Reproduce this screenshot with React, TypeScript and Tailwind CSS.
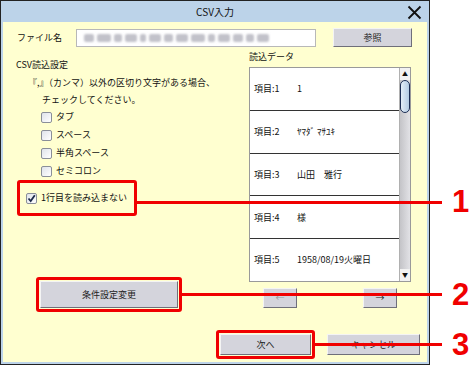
import type { ReactNode } from 'react';

const jp = { fontFamily: '"Noto Sans CJK JP", "Noto Sans", sans-serif' };

function Check({ checked = false }: { checked?: boolean }) {
  return (
    <span className="flex h-[11px] w-[11px] items-center justify-center rounded-[2px] border border-[#8a8f99] bg-gradient-to-br from-[#dfe3ea] to-[#ffffff]">
      {checked && (
        <svg width="9" height="9" viewBox="0 0 9 9">
          <path d="M1.5 4.5 L3.7 7 L7.8 1.2" fill="none" stroke="#1d2a4a" strokeWidth="1.8" />
        </svg>
      )}
    </span>
  );
}

function Btn({ children, className = '' }: { children?: ReactNode; className?: string }) {
  return (
    <div className={`flex items-center justify-center border border-[#f4f4f4] border-r-[#6f6f7a] border-b-[#6f6f7a] bg-[#d4d4dc] text-[9px] text-[#222] ${className}`}>
      {children}
    </div>
  );
}

const rows: [string, string][] = [
  ['項目:1', '1'],
  ['項目:2', 'ﾔﾏﾀﾞ ﾏｻﾕｷ'],
  ['項目:3', '山田　雅行'],
  ['項目:4', '様'],
  ['項目:5', '1958/08/19火曜日'],
];

const options = ['タブ', 'スペース', '半角スペース', 'セミコロン'];

export default function App() {
  return (
    <div className="relative h-[366px] w-[470px] overflow-hidden bg-white text-[#111]" style={jp}>
      <div className="flex h-[365px] w-[430px] flex-col border border-[#222]">
        {/* title bar */}
        <div className="relative flex h-[21px] items-center justify-center bg-[#bcd3e9] text-[10px]">
          CSV入力
          <svg className="absolute right-[7px] top-[4px]" width="15" height="15" viewBox="0 0 15 15">
            <path d="M1.5 1.5 L13.5 13.5 M13.5 1.5 L1.5 13.5" stroke="#111" strokeWidth="1.8" />
          </svg>
        </div>

        <div className="flex flex-1 flex-col border-x-2 border-b-2 border-[#bcd3e9] bg-[#ffffd0]">
          {/* file row */}
          <div className="mt-[6px] flex h-[19px] items-center">
            <div className="w-[73px] shrink-0 pl-[14px] text-[9px]">ファイル名</div>
            <div className="flex h-[18px] w-[240px] shrink-0 items-center gap-[3px] overflow-hidden border border-[#b8b8b8] bg-white pl-[7px]">
              {[10, 14, 8, 12, 6, 12, 9, 12, 14, 7, 12, 10, 8, 12].map((w, i) => (
                <span key={i} className="h-[8px] shrink-0 rounded-[2px] bg-[#c2c2ca] blur-[1px]" style={{ width: w }} />
              ))}
            </div>
            <Btn className="ml-[17px] h-[19px] w-[79px]">参照</Btn>
          </div>

          <div className="flex">
            {/* left column */}
            <div className="flex w-[246px] flex-col text-[9px] leading-[12px]">
              <div className="mt-[12px] pl-[13px]">CSV読込設定</div>
              <div className="mt-[6px] pl-[25px]">『,』（カンマ）以外の区切り文字がある場合、</div>
              <div className="mt-[5px] pl-[39px]">チェックしてください。</div>
              <div className="mt-[2px] flex flex-col pl-[38px]">
                {options.map((o) => (
                  <div key={o} className="flex h-[18px] items-center gap-[4px]">
                    <Check />
                    <span>{o}</span>
                  </div>
                ))}
              </div>
              <div className="ml-[14px] flex h-[36px] w-[120px] items-center gap-[4px] rounded-[3px] border-[3px] border-[#f00000] pl-[6px]">
                <Check checked />
                <span>1行目を読み込まない</span>
              </div>
              <div className="ml-[33px] mt-[61px] flex h-[35px] w-[146px] items-center justify-center rounded-[3px] border-[3px] border-[#f00000]">
                <Btn className="h-[27px] w-[138px]">条件設定変更</Btn>
              </div>
            </div>

            {/* right column */}
            <div className="flex w-[162px] flex-col">
              <div className="mt-[4px] h-[12px] text-[9px] leading-[12px]">読込データ</div>
              <div className="mt-[4px] flex h-[215px] border border-[#9a9a9a] bg-white">
                <div className="flex flex-1 flex-col">
                  {rows.map(([k, v], i) => (
                    <div
                      key={k}
                      className={`flex flex-1 items-center pl-[4px] text-[9px] ${i < 4 ? 'border-b border-[#333]' : ''}`}
                    >
                      <span className="w-[43px]">{k}</span>
                      <span>{v}</span>
                    </div>
                  ))}
                </div>
                <div className="flex w-[11px] flex-col border-l border-[#b0b0b0] bg-gradient-to-r from-[#c4c4c8] to-[#e2e2e6]">
                  <div className="flex h-[12px] items-center justify-center bg-[#f2f2f2] text-[6px] leading-none">▲</div>
                  <div className="h-[33px] w-[10px] rounded-[5px] border border-[#1e2f55] bg-gradient-to-r from-[#e4eef8] to-[#b4cce4]" />
                  <div className="flex-1" />
                  <div className="flex h-[12px] items-center justify-center bg-[#f2f2f2] text-[6px] leading-none">▼</div>
                </div>
              </div>
              <div className="mt-[6px] flex justify-between px-[14px]">
                <Btn className="h-[20px] w-[34px] text-[#999]">←</Btn>
                <Btn className="h-[20px] w-[34px]">→</Btn>
              </div>
            </div>
          </div>

          {/* bottom buttons */}
          <div className="mt-[18px] flex items-center pl-[213px]">
            <div className="flex h-[29px] w-[99px] items-center justify-center rounded-[3px] border-[3px] border-[#f00000]">
              <Btn className="h-[21px] w-[91px]">次へ</Btn>
            </div>
            <Btn className="ml-[12px] h-[21px] w-[93px]">キャンセル</Btn>
          </div>
        </div>
      </div>

      {/* annotation lines */}
      <div className="absolute left-[137px] top-[201px] h-[3px] w-[305px] bg-[#f00000]" />
      <div className="absolute left-[182px] top-[293px] h-[3px] w-[260px] bg-[#f00000]" />
      <div className="absolute left-[315px] top-[343px] h-[3px] w-[127px] bg-[#f00000]" />
      {[
        ['1', 'top-[184px]'],
        ['2', 'top-[277px]'],
        ['3', 'top-[327px]'],
      ].map(([n, t]) => (
        <div
          key={n}
          className={`absolute left-[452px] ${t} text-[31px] font-bold leading-[36px] text-[#f00000]`}
          style={{ fontFamily: '"Liberation Sans", Arial, sans-serif' }}
        >
          {n}
        </div>
      ))}
    </div>
  );
}
